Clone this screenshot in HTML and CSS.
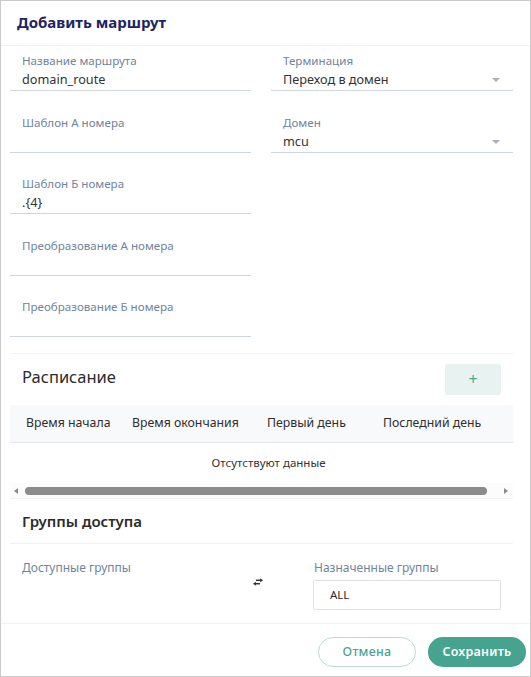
FILE: index.html
```html
<!DOCTYPE html>
<html lang="ru">
<head>
<meta charset="utf-8">
<title>Добавить маршрут</title>
<link rel="stylesheet" href="styles.css">
</head>
<body>
<div class="window">
  <div class="header"><h1 class="title">Добавить маршрут</h1></div>

  <div class="form">
    <div class="col">
      <div class="field"><div class="label">Название маршрута</div><div class="value">domain_route</div></div>
      <div class="field"><div class="label">Шаблон А номера</div><div class="value"></div></div>
      <div class="field"><div class="label">Шаблон Б номера</div><div class="value">.{4}</div></div>
      <div class="field"><div class="label">Преобразование А номера</div><div class="value"></div></div>
      <div class="field"><div class="label">Преобразование Б номера</div><div class="value"></div></div>
    </div>
    <div class="col">
      <div class="field select"><div class="label">Терминация</div><div class="value">Переход в домен<span class="caret"></span></div></div>
      <div class="field select"><div class="label">Домен</div><div class="value">mcu<span class="caret"></span></div></div>
    </div>
  </div>

  <div class="divider"></div>

  <div class="sched-head">
    <div class="sched-title">Расписание</div>
    <button class="add-btn">+</button>
  </div>

  <div class="table">
    <div class="thead">
      <div class="th c1">Время начала</div>
      <div class="th c2">Время окончания</div>
      <div class="th c3">Первый день</div>
      <div class="th c4">Последний день</div>
    </div>
    <div class="empty">Отсутствуют данные</div>
    <div class="scrollbar">
      <span class="arrow left"></span>
      <span class="thumb"></span>
      <span class="arrow right"></span>
    </div>
  </div>

  <div class="groups-head">Группы доступа</div>

  <div class="groups">
    <div class="g-left"><div class="g-label">Доступные группы</div></div>
    <div class="g-mid">
      <svg class="swap" width="12" height="10" viewBox="0 0 12 10">
        <path d="M4 3.3H9" stroke="#333" stroke-width="1.5"/>
        <path d="M8.2 1.3L11 3.3L8.2 5.3Z" fill="#333"/>
        <path d="M8 6.7H3" stroke="#333" stroke-width="1.5"/>
        <path d="M3.8 4.7L1 6.7L3.8 8.7Z" fill="#333"/>
      </svg>
    </div>
    <div class="g-right">
      <div class="g-label right">Назначенные группы</div>
      <div class="g-box">ALL</div>
    </div>
  </div>

  <div class="footer">
    <button class="btn cancel">Отмена</button>
    <button class="btn save">Сохранить</button>
  </div>
</div>
</body>
</html>
```

FILE: styles.css
```css
* { box-sizing: border-box; }
html, body { margin: 0; padding: 0; background: #fff; }
body { font-family: "Noto Sans", "Open Sans", sans-serif; color: #333; }

.window {
  width: 531px;
  height: 677px;
  border: 1px solid #cbcbcb;
  background: #fff;
  overflow: hidden;
}

.header {
  height: 45px;
  border-bottom: 1px solid #f0f1f3;
  display: flex;
  align-items: center;
  padding-left: 16px;
}
.title {
  margin: 0;
  font-size: 15px;
  font-weight: 700;
  color: #1d2462;
  line-height: 20px;
  padding-bottom: 2px;
}

.form {
  display: flex;
  gap: 20px;
  padding: 7px 17px 0 9px;
}
.col {
  display: flex;
  flex-direction: column;
  gap: 23.5px;
  width: 241px;
}
.col + .col { width: 242px; }

.field {
  border-bottom: 1px solid #cdd5df;
  padding-left: 12px;
}
.label {
  font-size: 11.6px;
  line-height: 16px;
  color: #6f84a0;
}
.value {
  font-size: 12.7px;
  line-height: 21px;
  height: 21px;
  color: #333;
  position: relative;
}
.caret {
  position: absolute;
  right: 13px;
  top: 9px;
  width: 0;
  height: 0;
  border-left: 4.5px solid transparent;
  border-right: 4.5px solid transparent;
  border-top: 4px solid #a9b1bd;
}

.divider {
  margin: 16px 17px 0 9px;
  border-top: 1px solid #f0f1f3;
}

.sched-head {
  display: flex;
  align-items: center;
  justify-content: space-between;
  margin: 0 29px 0 9px;
  padding: 10px 0 10px 12px;
}
.sched-title {
  font-size: 16.5px;
  line-height: 24px;
  color: #2b2b2b;
  padding-bottom: 6px;
}
.add-btn {
  width: 56px;
  height: 31px;
  border: none;
  border-radius: 3px;
  background: #e8f3f1;
  color: #4aa894;
  font-family: inherit;
  font-size: 16px;
  line-height: 1;
  padding: 0 0 2px 0;
}

.table {
  margin: 0 17px 0 9px;
  border-bottom: 1px solid #f0f1f3;
}
.thead {
  display: flex;
  height: 38px;
  background: #f8f9fb;
  border-bottom: 1px solid #e3e6ea;
  align-items: center;
  overflow: hidden;
  white-space: nowrap;
}
.th {
  font-size: 12.3px;
  color: #2e2e2e;
  flex: none;
  padding-left: 16px;
  padding-bottom: 2px;
}
.c1 { width: 106px; }
.c2 { width: 135px; }
.c3 { width: 116px; }
.c4 { width: 146px; }

.empty {
  height: 40px;
  text-align: center;
  font-size: 11.5px;
  line-height: 40px;
  color: #333;
  padding-left: 14px;
}
.scrollbar {
  height: 15px;
  display: flex;
  align-items: center;
  background: #fcfcfc;
  padding: 0 5px 0 3px;
}
.arrow {
  width: 0;
  height: 0;
  border-top: 3.5px solid transparent;
  border-bottom: 3.5px solid transparent;
  flex: none;
}
.arrow.left { border-right: 4px solid #8a8a8a; margin-left: 1px; }
.arrow.right { border-left: 4px solid #8a8a8a; margin-left: auto; }
.thumb {
  display: block;
  margin-left: 7px;
  width: 462px;
  height: 8px;
  border-radius: 4px;
  background: #8c8c8c;
}

.groups-head {
  height: 45px;
  margin: 0 17px 0 9px;
  padding-left: 12px;
  border-bottom: 1px solid #f0f1f3;
  display: flex;
  align-items: center;
  font-size: 15px;
  font-weight: 600;
  color: #2b2b2b;
  padding-bottom: 1px;
}

.groups {
  display: flex;
  margin: 0 0 0 9px;
  padding-top: 15px;
  height: 79px;
}
.g-left { width: 242px; padding-left: 12px; }
.g-mid { width: 12px; padding-top: 18px; display: flex; justify-content: center; align-items: flex-start; }
.g-right { width: 188px; margin-left: 49px; }
.g-label {
  font-size: 12px;
  line-height: 18px;
  color: #6f84a0;
}
.g-label.right { padding-left: 1px; }
.g-box {
  margin-top: 3px;
  height: 30px;
  border: 1px solid #dfe3e8;
  border-radius: 2px;
  font-size: 11.5px;
  line-height: 28px;
  padding-left: 16px;
  color: #2b2b2b;
}

.footer {
  border-top: 1px solid #f0f1f3;
  display: flex;
  justify-content: flex-end;
  gap: 12px;
  padding: 13px 4px 0 0;
}
.btn {
  width: 98px;
  height: 30px;
  border-radius: 15px;
  font-family: inherit;
  font-size: 12.5px;
  letter-spacing: 0.25px;
  padding: 0 0 2px 0;
}
.cancel {
  background: #fff;
  border: 1px solid #b9ddd5;
  color: #47a591;
  font-weight: 500;
}
.save {
  background: #45a390;
  border: none;
  color: #fff;
  font-weight: 600;
}
```
